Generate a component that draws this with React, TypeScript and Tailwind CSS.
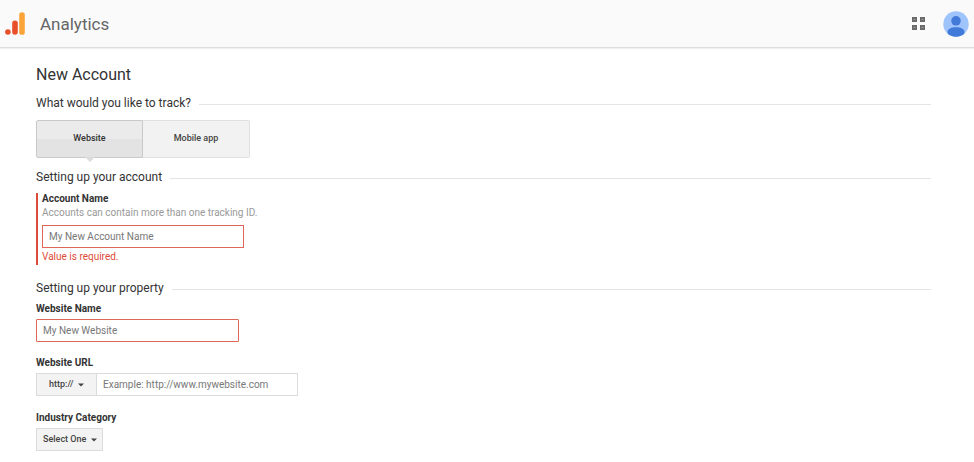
import type { ReactNode } from "react";
import clsx from "clsx";

const tabs = [
  { name: "Website", active: true },
  { name: "Mobile app", active: false },
];

function Logo() {
  return (
    <svg viewBox="0 0 20 23" className="h-[23px] w-5" aria-hidden="true">
      <circle cx="2.9" cy="20" r="2.8" fill="#e8502a" />
      <rect x="7.2" y="8.6" width="5.6" height="14.2" rx="2.8" fill="#e8502a" />
      <rect x="14.2" y="0.2" width="5.6" height="22.6" rx="2.6" fill="#fba43a" />
    </svg>
  );
}

function AppsIcon() {
  return (
    <svg viewBox="0 0 13 13" className="h-[13px] w-[13px]" aria-hidden="true">
      {[0, 8].map((y) =>
        [0, 8].map((x) => (
          <g key={`${x}-${y}`}>
            <rect x={x} y={y} width="5" height="5" fill="#6a6a6a" />
            <rect x={x + 1.5} y={y + 2} width="2" height="1" fill="#999" />
          </g>
        ))
      )}
    </svg>
  );
}

function Avatar() {
  return (
    <svg viewBox="0 0 26 26" className="h-[26px] w-[26px]" aria-hidden="true">
      <defs>
        <clipPath id="avatar-clip">
          <circle cx="13" cy="13" r="12.7" />
        </clipPath>
      </defs>
      <g clipPath="url(#avatar-clip)">
        <rect width="26" height="26" fill="#9fc3fb" />
        <circle cx="13" cy="9.8" r="4.8" fill="#427ad9" />
        <path d="M4.6 26v-5.2c0-2.8 3.4-4.6 8.4-4.6s8.4 1.8 8.4 4.6V26z" fill="#427ad9" />
      </g>
    </svg>
  );
}

function Caret({ className }: { className?: string }) {
  return (
    <svg viewBox="0 0 6 4" className={clsx("pointer-events-none absolute h-1 w-1.5", className)} aria-hidden="true">
      <path d="M0 0.4h6L3 3.6z" fill="#444" />
    </svg>
  );
}

function SectionTitle({ children }: { children: ReactNode }) {
  return (
    <div className="flex items-center gap-2">
      <h2 className="text-xs leading-4 text-[#333]">{children}</h2>
      <div className="mt-0.5 h-px flex-1 bg-[#e4e4e4]" />
    </div>
  );
}

const labelStyle = "block text-[10px] leading-3 font-bold text-[#333]";
const inputStyle = "block h-[23px] border bg-white px-1.5 text-[10px] text-[#444] outline-none placeholder:text-[#777]";
const selectStyle = "block h-[23px] appearance-none border border-[#dcdcdc] bg-[#f3f3f3] text-[9px] text-[#444] outline-none";

export default function App() {
  return (
    <div className="min-h-screen bg-white font-['Roboto',sans-serif]">
      {/* Top bar */}
      <header className="flex h-12 items-center justify-between border-b border-[#dedede] bg-[#fafafa] px-[5px] shadow-[0_1px_1px_#f0f0f0]">
        <div className="flex items-center gap-[15px]">
          <Logo />
          <span className="text-[17px] leading-6 text-[#666]">Analytics</span>
        </div>
        <div className="flex items-center gap-[18px]">
          <button type="button" aria-label="Apps">
            <AppsIcon />
          </button>
          <button type="button" aria-label="Account">
            <Avatar />
          </button>
        </div>
      </header>

      <main className="mr-[43px] ml-9 pt-[17px]">
        <h1 className="mb-2.5 text-base leading-5 text-[#333]">New Account</h1>

        <SectionTitle>What would you like to track?</SectionTitle>
        <div className="mt-[9px] mb-[11px] flex">
          {tabs.map((tab) => (
            <button
              key={tab.name}
              type="button"
              aria-pressed={tab.active}
              className={clsx(
                "relative h-[38px] w-[107px] border text-[9px] font-medium",
                tab.active
                  ? "rounded-l-xs border-[#c9c9c9] bg-linear-to-b from-[#ebebeb] from-50% to-[#e3e3e3] to-50% text-[#333]"
                  : "rounded-r-xs border-l-0 border-[#e0e0e0] bg-[#f2f2f2] text-[#444]"
              )}
            >
              {tab.name}
              {tab.active && (
                <svg viewBox="0 0 10 5" className="absolute top-full left-1/2 h-[5px] w-2.5 -translate-x-1/2" aria-hidden="true">
                  <path d="M0 0h10L5 5z" fill="#dcdcdc" />
                </svg>
              )}
            </button>
          ))}
        </div>

        {/* Account */}
        <SectionTitle>Setting up your account</SectionTitle>
        <div className="mt-2 mb-[15px] border-l-2 border-[#dd4b39] pl-1">
          <label htmlFor="account-name" className={labelStyle}>
            Account Name
          </label>
          <p className="mt-0.5 mb-1.5 text-[10px] leading-3 text-[#999]">
            Accounts can contain more than one tracking ID.
          </p>
          <input
            id="account-name"
            type="text"
            placeholder="My New Account Name"
            className={clsx(inputStyle, "w-[202px] border-[#e0665a]")}
          />
          <p className="pt-[3px] pb-0.5 text-[10px] leading-3 text-[#dd4b39]">Value is required.</p>
        </div>

        {/* Property */}
        <SectionTitle>Setting up your property</SectionTitle>
        <div className="mt-[7px] mb-[15px]">
          <label htmlFor="website-name" className={labelStyle}>
            Website Name
          </label>
          <input
            id="website-name"
            type="text"
            placeholder="My New Website"
            className={clsx(inputStyle, "mt-1 w-[203px] rounded-[1px] border-[#e0665a]")}
          />
        </div>

        <div className="mb-4">
          <label htmlFor="website-url" className={labelStyle}>
            Website URL
          </label>
          <div className="mt-1 flex">
            <div className="relative">
              <select aria-label="Protocol" className={clsx(selectStyle, "w-[60px] border-r-0 pl-3 font-medium")}>
                <option>http://</option>
                <option>https://</option>
              </select>
              <Caret className="top-2.5 right-3" />
            </div>
            <input
              id="website-url"
              type="text"
              placeholder="Example: http://www.mywebsite.com"
              className={clsx(inputStyle, "w-[202px] border-[#dcdcdc]")}
            />
          </div>
        </div>

        <div>
          <label htmlFor="industry" className={labelStyle}>
            Industry Category
          </label>
          <div className="relative mt-1 w-[67px]">
            <select id="industry" className={clsx(selectStyle, "w-full pl-1.5 font-medium")}>
              <option>Select One</option>
            </select>
            <Caret className="top-2.5 right-1.5" />
          </div>
        </div>
      </main>
    </div>
  );
}
